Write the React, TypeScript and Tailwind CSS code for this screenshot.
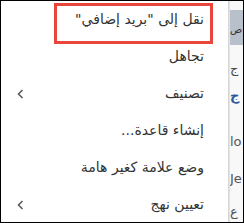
import React from "react";

function Chevron() {
  return (
    <svg width="7" height="10" viewBox="0 0 7 10" className="mr-auto shrink-0">
      <path d="M5.5 1 L1.5 5 L5.5 9" fill="none" stroke="#555" strokeWidth="1.5" />
    </svg>
  );
}

export default function App() {
  const items = [
    { label: 'نقل إلى "بريد إضافي"', sub: false },
    { label: "تجاهل", sub: false },
    { label: "تصنيف", sub: true },
    { label: "إنشاء قاعدة...", sub: false },
    { label: "وضع علامة كغير هامة", sub: false },
    { label: "تعيين نهج", sub: true },
  ];
  return (
    <div className="relative w-[244px] h-[223px] border border-black flex overflow-hidden bg-white font-['DejaVu_Sans',sans-serif]">
      <div className="w-[227px] shrink-0 flex flex-col">
        {items.map((it) => (
          <div
            key={it.label}
            dir="rtl"
            className="h-[37px] shrink-0 flex items-center pr-[24px] pl-[16px] text-[14px] text-[#333]"
          >
            <span className="whitespace-nowrap">{it.label}</span>
            {it.sub && <Chevron />}
          </div>
        ))}
      </div>
      <div className="w-[2px] shrink-0 bg-gradient-to-r from-[#cfcfcf] to-[#ebebeb]" />
      <div className="flex-1 bg-[#f8f8f8] flex flex-col overflow-hidden pt-[9px] text-[13px] leading-[14px]">
        <div className="h-[35px] shrink-0 bg-[#b8c1cb] flex items-end pb-[8px] text-[10px] text-[#333]">ص</div>
        <div className="mt-[17px] shrink-0 text-[#444]">ج</div>
        <div className="mt-[13px] shrink-0 text-[#2b579a] font-bold">ج</div>
        <div className="mt-[32px] shrink-0 text-[#555]">lo</div>
        <div className="mt-[23px] shrink-0 text-[#555]">Je</div>
        <div className="mt-[19px] shrink-0 text-[#555]">ع</div>
      </div>
      <div className="absolute left-[53px] top-[2px] w-[159px] h-[41px] border-[3px] border-[#e8463b]" />
    </div>
  );
}
